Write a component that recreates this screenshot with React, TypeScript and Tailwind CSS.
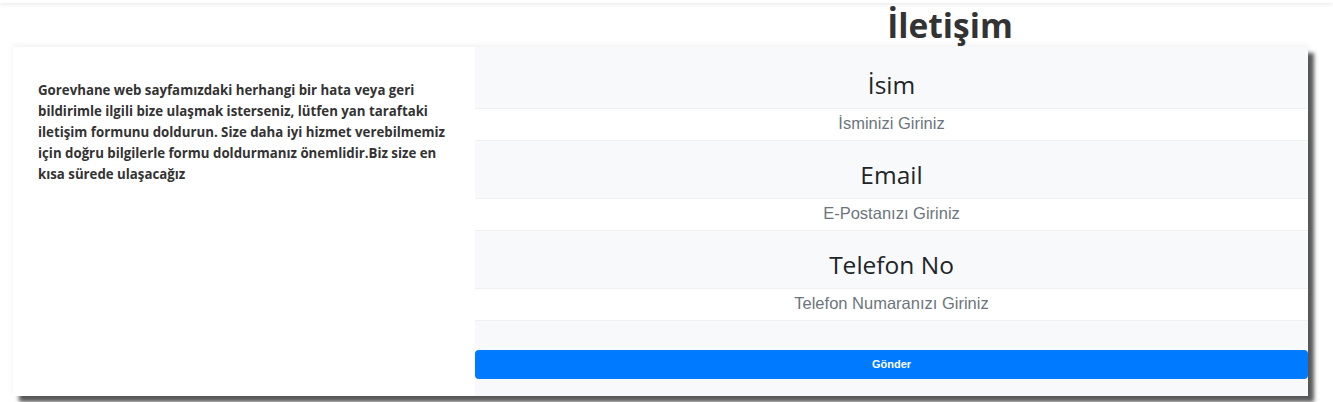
import React from "react";

const fields = [
  { label: "İsim", placeholder: "İsminizi Giriniz" },
  { label: "Email", placeholder: "E-Postanızı Giriniz" },
  { label: "Telefon No", placeholder: "Telefon Numaranızı Giriniz" },
];

export default function App() {
  return (
    <div className="h-[402px] w-[1333px] bg-white font-['Open_Sans',sans-serif]">
      <div className="h-[3px] w-full bg-white shadow-[0_1px_4px_rgba(0,0,0,0.12)]" />

      <h1 className="pl-[567px] pt-[1px] text-center text-[33.5px] font-bold leading-[42px] text-[#333]">
        İletişim
      </h1>

      <div className="ml-[13px] mt-[1px] flex h-[349px] w-[1295px] shadow-[0_-2px_6px_rgba(0,0,0,0.06),6px_6px_4px_rgba(0,0,0,0.65)]">
        {/* left text */}
        <div className="w-[462px] bg-white pl-[25px] pr-[18px] pt-[33px]">
          <p className="text-[13.25px] font-bold leading-[21px] text-[#333]">
            Gorevhane web sayfamızdaki herhangi bir hata veya geri bildirimle ilgili bize ulaşmak isterseniz, lütfen yan taraftaki iletişim formunu doldurun. Size daha iyi hizmet verebilmemiz için doğru bilgilerle formu doldurmanız önemlidir.Biz size en kısa sürede ulaşacağız
          </p>
        </div>

        {/* form */}
        <form className="flex flex-1 flex-col bg-[#f8f9fa] pt-[4px]">
          {fields.map((f) => (
            <div key={f.label} className="mt-[18px] flex flex-col">
              <label className="mb-[7px] text-center text-[24.5px] leading-[32px] text-[#212529]">
                {f.label}
              </label>
              <input
                className="h-[33px] w-full border-y border-[#eef0f2] bg-white pb-[2px] text-center font-['Liberation_Sans',Arial,sans-serif] text-[16.5px] text-[#495057] outline-none placeholder:text-[#6c757d]"
                placeholder={f.placeholder}
              />
            </div>
          ))}
          <button
            type="button"
            className="mt-[29px] h-[29px] w-full rounded-[4px] bg-[#007bff] font-['Liberation_Sans',Arial,sans-serif] text-[11px] font-bold text-white"
          >
            Gönder
          </button>
        </form>
      </div>
    </div>
  );
}
